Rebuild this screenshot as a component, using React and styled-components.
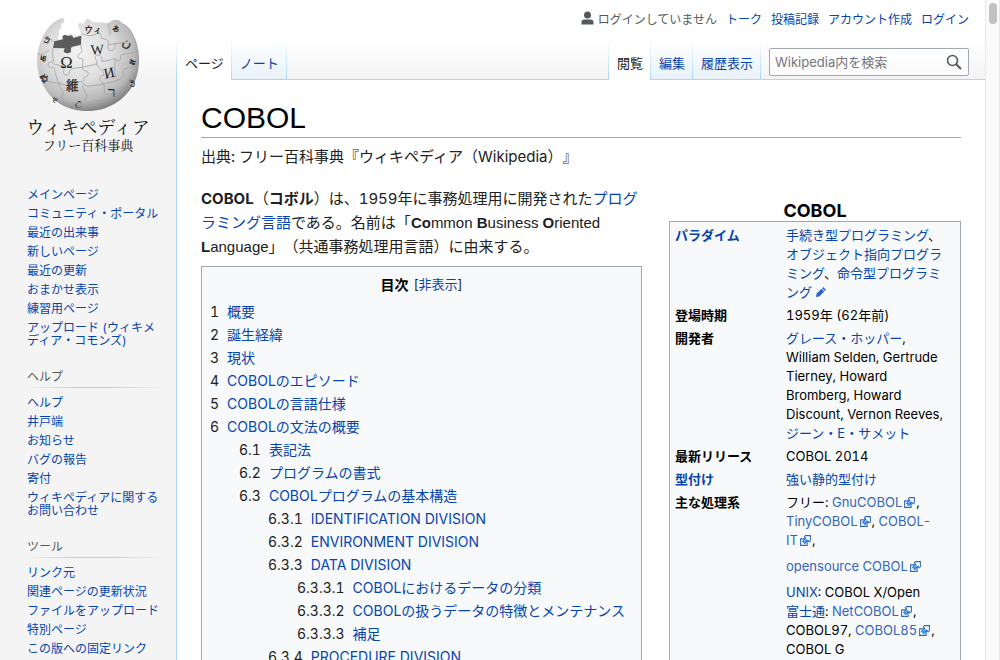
import React from "react";
import styled, { createGlobalStyle } from "styled-components";

const GlobalStyle = createGlobalStyle`
  *, *::before, *::after { box-sizing: border-box; }
  body {
    margin: 0;
    background: #fff;
    color: #202122;
    font-family: Inter, "Noto Sans CJK JP", sans-serif;
    font-size: 15px;
    font-variant-numeric: tabular-nums;
    text-spacing-trim: space-all;
  }
  a { color: #0645ad; text-decoration: none; }
  a:hover { text-decoration: underline; }
  ul { list-style: none; margin: 0; padding: 0; }
`;

/* ---------- frame ---------- */

const Shell = styled.div`
  display: flex;
  height: 100vh;
`;

const Viewport = styled.div`
  flex: 1;
  min-width: 0;
  display: flex;
  align-items: flex-start;
  overflow: hidden auto;
  scrollbar-width: none;
  background: linear-gradient(#fff 50%, #f4f4f4 100%) 0 0 / 100% 80px no-repeat, #f4f4f4;
`;

const ScrollTrack = styled.div`
  flex: none;
  width: 15px;
  padding: 3px 3px 0;
  background: #fafafa;
  border: solid #e8e8e8;
  border-width: 0 1px;
`;

const ScrollThumb = styled.div`
  width: 8px;
  height: 21px;
  margin-left: auto;
  margin-right: auto;
  border-radius: 4px;
  background: #c1c1c1;
`;

/* ---------- sidebar ---------- */

const Sidebar = styled.aside`
  flex: none;
  width: 176px;
  font-size: 12px;
  line-height: 13px;
`;

const LogoLink = styled.a`
  display: flex;
  flex-direction: column;
  align-items: center;
  height: 160px;
  padding-top: 12px;
  color: #111;
  font-family: "Noto Serif CJK JP", serif;
  &:hover { text-decoration: none; }
  svg { display: block; }
`;

const LogoName = styled.span`
  font-size: 18px;
  line-height: 24px;
`;

const LogoTag = styled.span`
  font-size: 13px;
  line-height: 14px;
`;

const Portal = styled.nav`
  padding: ${(p) => (p.$first ? "25px" : "17px")} 13px 0 27px;
`;

const PortalTitle = styled.h3`
  margin: 0 0 5px -1px;
  padding: 2px 0 4px 1px;
  color: #54595d;
  font-size: 12px;
  font-weight: 400;
  line-height: 15px;
  background: linear-gradient(to right, rgba(200, 204, 209, 0), #c8ccd1 33%, #c8ccd1 66%, rgba(200, 204, 209, 0))
    0 100% / 100% 1px no-repeat;
`;

const PortalItem = styled.li`
  padding: 3px 0;
`;

/* ---------- header ---------- */

const Main = styled.div`
  flex: 1;
  min-width: 0;
`;

const Personal = styled.ul`
  display: flex;
  justify-content: flex-end;
  align-items: center;
  gap: 9px;
  height: 40px;
  padding-right: 16px;
  font-size: 12px;
  line-height: 16px;
`;

const Anonymous = styled.li`
  display: flex;
  align-items: center;
  gap: 4px;
  color: #54595d;
`;

const NavRow = styled.div`
  display: flex;
  height: 40px;
`;

const Tabs = styled.ul`
  display: flex;
  border-left: 1px solid;
  border-image: linear-gradient(#fff, #a7d7f9) 1;
`;

const Tab = styled.li`
  display: flex;
  padding: 12px 7px 0 8px;
  font-size: 13px;
  line-height: 22px;
  border: solid;
  border-width: ${(p) => (p.$active ? "0 1px 0 0" : "0 1px 1px 0")};
  border-image: linear-gradient(#fff, #a7d7f9) 1;
  background: ${(p) => (p.$active ? "#fff" : "linear-gradient(#fff, #e8f2f8)")};
  a { color: ${(p) => (p.$active ? "#202122" : "#0645ad")}; }
`;

const NavFill = styled.div`
  flex: 1;
  border-bottom: 1px solid #a7d7f9;
`;

const SearchArea = styled.form`
  padding: 8px 16px 0 8px;
  border-bottom: 1px solid #a7d7f9;
`;

const SearchBox = styled.div`
  display: flex;
  align-items: center;
  width: 200px;
  height: 28px;
  padding: 0 6px 0 5px;
  border: 1px solid #a2a9b1;
  border-radius: 2px;
  background: rgba(255, 255, 255, 0.5);
`;

const SearchInput = styled.input`
  flex: 1;
  min-width: 0;
  padding: 0;
  border: 0;
  outline: 0;
  background: none;
  font: inherit;
  font-size: 13px;
  line-height: 20px;
  &::placeholder { color: #72777d; opacity: 1; }
`;

const SearchButton = styled.button`
  display: flex;
  padding: 0;
  border: 0;
  background: none;
  cursor: pointer;
`;

/* ---------- article ---------- */

const Article = styled.main`
  padding: 20px 24px 24px;
  background: #fff;
  border-left: 1px solid #a7d7f9;
`;

const Title = styled.h1`
  margin: 0;
  padding-bottom: 1px;
  border-bottom: 1px solid #a2a9b1;
  color: #000;
  font: 400 30px/36px "Liberation Sans", sans-serif;
`;

const SiteSub = styled.div`
  padding-top: 7px;
  line-height: 24px;
`;

const Body = styled.div`
  padding-top: 18px;
`;

const Lead = styled.p`
  margin: 0 0 7px;
  line-height: 24px;
`;

const English = styled.span`
  font-family: "Liberation Sans", sans-serif;
`;

const Toc = styled.nav`
  display: table;
  width: 441px;
  max-width: 100%;
  padding: 6px 8px;
  border: 1px solid #a2a9b1;
  background: #f8f9fa;
  font-size: 14px;
  line-height: 23px;
`;

const TocHead = styled.div`
  display: flex;
  justify-content: center;
  gap: 5px;
  margin-bottom: 4px;
  font-size: 13px;
`;

const TocTitle = styled.h2`
  margin: 0;
  color: #000;
  font-size: 14px;
  font-weight: 700;
`;

const TocToggle = styled.button`
  padding: 0;
  border: 0;
  background: none;
  color: #0645ad;
  font: inherit;
  cursor: pointer;
`;

const TocItem = styled.li`
  > ul { padding-left: 29px; }
`;

const TocLine = styled.a`
  display: flex;
  gap: 8px;
  white-space: nowrap;
`;

const TocNumber = styled.span`
  color: #202122;
`;

const Infobox = styled.table`
  float: right;
  width: 292px;
  margin: 14px 0 16px 24px;
  padding: 2px 3px;
  border: 1px solid #a2a9b1;
  border-spacing: 0;
  background: #f8f9fa;
  color: #000;
  font-size: 13px;
  line-height: 19px;
  caption {
    font-size: 18px;
    font-weight: 700;
    line-height: 20px;
  }
  th, td {
    padding: 2px;
    text-align: left;
    vertical-align: top;
  }
  th { width: 111px; }
  td { padding-right: 6px; }
  p { margin: 7px 0; }
`;

const PencilIcon = styled.svg`
  width: 10px;
  height: 10px;
  margin-left: 4px;
  vertical-align: 0;
`;

const ExternalLink = styled.a`
  color: #36b;
  svg {
    width: 13px;
    height: 13px;
    margin-left: 1px;
    vertical-align: -2px;
  }
`;

const Ext = ({ children }) => (
  <ExternalLink href="#">
    {children}
    <svg viewBox="0 0 12 12" aria-hidden="true">
      <path fill="#fff" stroke="#3366bb" d="M1.5 4.5h6v6h-6z" />
      <path fill="#3366bb" d="M5.765 1H11v5.39L9.427 7.937l-1.31-1.31L5.393 9.35l-2.69-2.688 2.81-2.808L4.2 2.544z" />
      <path fill="#fff" d="m9.995 2.004.022 4.885L8.2 5.07 5.32 7.95 4.09 6.723l2.882-2.88-1.85-1.852z" />
      <path fill="#2a9df4" d="M4 5v3.200h3.200L6.200 7.200 7.800 5.600l-1-1-1.600 1.600z" />
    </svg>
  </ExternalLink>
);

const Globe = () => (
  <svg width="110" height="102" viewBox="0 0 330 306" aria-hidden="true">
    <defs>
      <radialGradient id="ball" cx="0.42" cy="0.36" r="0.66">
        <stop offset="0" stopColor="#f4f4f4" />
        <stop offset="0.5" stopColor="#dcdcdc" />
        <stop offset="0.8" stopColor="#b9b9b9" />
        <stop offset="1" stopColor="#7c7c7c" />
      </radialGradient>
    </defs>
    <path
      fill="url(#ball)"
      d="M86 19 C64 26 42 46 30 74 C6 118 6 176 32 222 C62 278 112 297 164 297 C222 297 276 266 304 212 C326 162 322 104 298 62 C290 48 280 38 268 34 C262 26 254 22 246 24 C236 22 232 32 222 34 C208 30 194 32 184 31 C176 34 176 22 164 21 C154 20 156 34 150 35 C144 32 138 32 134 38 C138 48 140 58 144 68 L124 72 C122 62 106 62 106 76 L78 83 C72 74 82 70 78 60 C76 52 88 52 84 42 C82 36 92 34 94 27 C96 20 90 18 86 19 Z"
    />
    <path
      fill="#5c5c5c"
      d="M64 88 L90 82 C84 70 96 66 106 72 C114 66 122 72 120 78 L145 71 L144 98 L116 105 C110 112 120 120 108 123 C94 126 88 118 96 109 L60 108 Z"
    />
    <g fill="none" stroke="#a2a2a2" strokeWidth="2.5">
      <path d="M60 108 C56 126 64 144 60 152 C48 146 40 158 50 166 C56 168 60 162 64 170 C66 186 74 204 78 214" />
      <path d="M62 156 C78 158 88 164 94 172 C84 188 104 196 110 182 C108 172 118 168 148 166" />
      <path d="M144 98 C142 110 152 114 142 124 C130 128 134 142 146 140 C152 140 150 150 148 166 C146 180 164 172 166 184 C164 198 150 190 152 208" />
      <path d="M146 66 C160 68 172 76 188 66 C196 58 208 66 204 78 C220 84 226 78 228 98 C218 108 230 120 240 114 C252 106 240 98 252 94 C262 94 272 92 284 88" />
      <path d="M148 166 C160 162 176 160 190 156 C196 146 180 140 190 130 C202 126 210 136 206 148 C222 148 236 142 246 140 C254 152 268 144 262 132 C268 124 284 128 310 118" />
      <path d="M190 156 C200 172 216 178 212 190 C200 190 194 206 208 210 C216 216 212 232 216 246 C230 252 240 240 250 246" />
      <path d="M78 214 C96 218 118 226 132 222 C130 208 148 204 152 216 C154 226 178 222 210 216 C236 210 258 206 268 196 C276 184 264 178 276 170 L314 160" />
      <path d="M34 204 C50 212 62 210 78 214 C80 232 96 238 88 252 C84 268 100 276 112 288" />
      <path d="M148 222 C152 240 166 246 160 256 C150 264 166 276 176 270 C188 262 196 270 214 264 C238 260 262 246 276 222" />
      <path d="M14 126 C28 132 34 120 48 116 M32 74 C44 86 50 72 62 90 M228 34 C224 46 236 54 230 70 M246 140 C248 160 240 176 250 196 M226 98 L252 94" />
    </g>
    <g fill="#222" fontFamily='"Liberation Serif", "Noto Serif CJK JP", serif' textAnchor="middle">
      <text x="100" y="169" fontSize="50">Ω</text>
      <text x="194" y="127" fontSize="42" transform="rotate(-4 194 127)">W</text>
      <text x="229" y="197" fontSize="44" transform="rotate(-12 229 185)">И</text>
      <text x="118" y="233" fontSize="38" stroke="#222">維</text>
      <text x="180" y="62" fontSize="28" stroke="#222">ウィ</text>
      <text x="250" y="58" fontSize="28" stroke="#222" transform="rotate(25 250 48)">ぁ</text>
      <text x="282" y="104" fontSize="40" transform="rotate(20 282 96)">ن</text>
      <text x="236" y="256" fontSize="46">ר</text>
      <text x="40" y="88" fontSize="30" transform="rotate(-30 40 80)">ي</text>
      <text x="28" y="150" fontSize="30" stroke="#222" transform="rotate(-80 28 140)">க</text>
      <text x="32" y="208" fontSize="28" stroke="#222" transform="rotate(55 32 200)">ぬ</text>
      <text x="298" y="160" fontSize="28" stroke="#222" transform="rotate(-70 298 152)">ส</text>
      <text x="292" y="220" fontSize="26" transform="rotate(-50 292 210)">ق</text>
      <text x="138" y="280" fontSize="28" transform="rotate(8 138 272)">උ</text>
      <text x="66" y="270" fontSize="24" transform="rotate(38 66 262)">ዊ</text>
    </g>
  </svg>
);

/* ---------- data ---------- */

const portals = [
  {
    items: ["メインページ", "コミュニティ・ポータル", "最近の出来事", "新しいページ", "最近の更新", "おまかせ表示", "練習用ページ", "アップロード (ウィキメディア・コモンズ)"],
  },
  { title: "ヘルプ", items: ["ヘルプ", "井戸端", "お知らせ", "バグの報告", "寄付", "ウィキペディアに関するお問い合わせ"] },
  { title: "ツール", items: ["リンク元", "関連ページの更新状況", "ファイルをアップロード", "特別ページ", "この版への固定リンク"] },
];

const contents = [
  { n: "1", t: "概要" },
  { n: "2", t: "誕生経緯" },
  { n: "3", t: "現状" },
  { n: "4", t: "COBOLのエピソード" },
  { n: "5", t: "COBOLの言語仕様" },
  {
    n: "6",
    t: "COBOLの文法の概要",
    sub: [
      { n: "6.1", t: "表記法" },
      { n: "6.2", t: "プログラムの書式" },
      {
        n: "6.3",
        t: "COBOLプログラムの基本構造",
        sub: [
          { n: "6.3.1", t: "IDENTIFICATION DIVISION" },
          { n: "6.3.2", t: "ENVIRONMENT DIVISION" },
          {
            n: "6.3.3",
            t: "DATA DIVISION",
            sub: [
              { n: "6.3.3.1", t: "COBOLにおけるデータの分類" },
              { n: "6.3.3.2", t: "COBOLの扱うデータの特徴とメンテナンス" },
              { n: "6.3.3.3", t: "補足" },
            ],
          },
          { n: "6.3.4", t: "PROCEDURE DIVISION" },
        ],
      },
    ],
  },
];

const TocList = ({ entries }) => (
  <ul>
    {entries.map((e) => (
      <TocItem key={e.n}>
        <TocLine href="#">
          <TocNumber>{e.n}</TocNumber>
          {e.t}
        </TocLine>
        {e.sub && <TocList entries={e.sub} />}
      </TocItem>
    ))}
  </ul>
);

const L = ({ children }) => <a href="#">{children}</a>;

export default function App() {
  return (
    <Shell>
      <GlobalStyle />
      <Viewport>
        <Sidebar>
          <LogoLink href="#">
            <Globe />
            <LogoName>ウィキペディア</LogoName>
            <LogoTag>フリー百科事典</LogoTag>
          </LogoLink>
          {portals.map((p, i) => (
            <Portal key={i} $first={i === 0}>
              {p.title && <PortalTitle>{p.title}</PortalTitle>}
              <ul>
                {p.items.map((t) => (
                  <PortalItem key={t}>
                    <L>{t}</L>
                  </PortalItem>
                ))}
              </ul>
            </Portal>
          ))}
        </Sidebar>
        <Main>
          <Personal>
            <Anonymous>
              <svg width="13" height="18" viewBox="0 0 13 18" aria-hidden="true">
                <g fill="#54595d">
                  <circle cx="6.500" cy="4" r="3.500" />
                  <path d="M0.500 13.500v-2.500q0-2.500 3-2.500h6q3 0 3 2.500v2.500z" />
                </g>
              </svg>
              ログインしていません
            </Anonymous>
            {["トーク", "投稿記録", "アカウント作成", "ログイン"].map((t) => (
              <li key={t}>
                <L>{t}</L>
              </li>
            ))}
          </Personal>
          <NavRow>
            <Tabs>
              <Tab $active><L>ページ</L></Tab>
              <Tab><L>ノート</L></Tab>
            </Tabs>
            <NavFill />
            <Tabs>
              <Tab $active><L>閲覧</L></Tab>
              <Tab><L>編集</L></Tab>
              <Tab><L>履歴表示</L></Tab>
            </Tabs>
            <SearchArea>
              <SearchBox>
                <SearchInput type="search" aria-label="Wikipedia内を検索" placeholder="Wikipedia内を検索" />
                <SearchButton type="button" aria-label="検索">
                  <svg width="16" height="16" viewBox="0 0 16 16" fill="none" stroke="#54595d" aria-hidden="true">
                    <circle cx="6.500" cy="6.500" r="5" strokeWidth="1.600" />
                    <path d="M10.200 10.200 15 15" strokeWidth="2" />
                  </svg>
                </SearchButton>
              </SearchBox>
            </SearchArea>
          </NavRow>
          <Article>
            <Title>COBOL</Title>
            <SiteSub>出典: フリー百科事典『ウィキペディア（Wikipedia）』</SiteSub>
            <Body>
              <Infobox>
                <caption>COBOL</caption>
                <tbody>
                  <tr>
                    <th scope="row"><L>パラダイム</L></th>
                    <td>
                      <L>手続き型プログラミング</L>、<L>オブジェクト指向プログラミング</L>、<L>命令型プログラミング</L>
                      <PencilIcon viewBox="0 0 10 10" aria-hidden="true">
                        <path fill="#36c" d="M0 10 .6 6.600 5.400 1.800 8.200 4.600 3.400 9.400zM6 1.200 7.200 0 10 2.800 8.800 4z" />
                      </PencilIcon>
                    </td>
                  </tr>
                  <tr>
                    <th scope="row">登場時期</th>
                    <td>1959年 (62年前)</td>
                  </tr>
                  <tr>
                    <th scope="row">開発者</th>
                    <td>
                      <L>グレース・ホッパー</L>,<br />
                      William Selden, Gertrude<br />
                      Tierney, Howard<br />
                      Bromberg, Howard<br />
                      Discount, Vernon Reeves,<br />
                      <L>ジーン・E・サメット</L>
                    </td>
                  </tr>
                  <tr>
                    <th scope="row">最新リリース</th>
                    <td>COBOL 2014</td>
                  </tr>
                  <tr>
                    <th scope="row"><L>型付け</L></th>
                    <td><L>強い静的型付け</L></td>
                  </tr>
                  <tr>
                    <th scope="row">主な処理系</th>
                    <td>
                      フリー: <Ext>GnuCOBOL</Ext>,<br />
                      <Ext>TinyCOBOL</Ext>, <Ext>COBOL-<br />IT</Ext>,
                      <p><Ext>opensource COBOL</Ext></p>
                      <L>UNIX</L>: COBOL X/Open<br />
                      <L>富士通</L>: <Ext>NetCOBOL</Ext>,<br />
                      COBOL97, <Ext>COBOL85</Ext>,<br />
                      COBOL G
                    </td>
                  </tr>
                </tbody>
              </Infobox>
              <Lead>
                <b>COBOL</b>（<b>コボル</b>）は、1959年に事務処理用に開発された<L>プログラミング言語</L>である。名前は「
                <English lang="en"><b>Co</b>mmon <b>B</b>usiness <b>O</b>riented <b>L</b>anguage</English>
                」（共通事務処理用言語）に由来する。
              </Lead>
              <Toc aria-label="目次">
                <TocHead>
                  <TocTitle>目次</TocTitle>
                  <span>[<TocToggle type="button">非表示</TocToggle>]</span>
                </TocHead>
                <TocList entries={contents} />
              </Toc>
            </Body>
          </Article>
        </Main>
      </Viewport>
      <ScrollTrack>
        <ScrollThumb />
      </ScrollTrack>
    </Shell>
  );
}
